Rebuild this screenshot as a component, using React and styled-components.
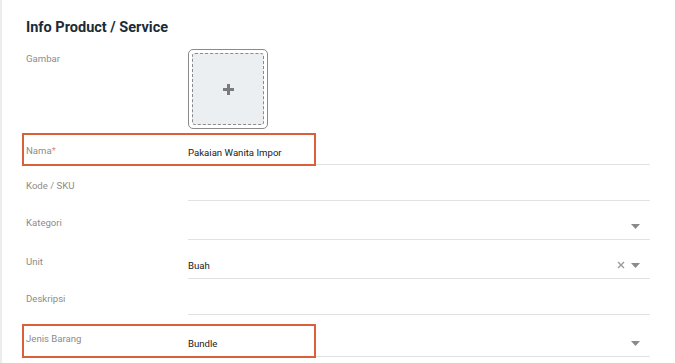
import React from 'react'
import styled, { createGlobalStyle } from 'styled-components'

const Global = createGlobalStyle`
  html, body {
    margin: 0;
    padding: 0;
    background: #fff;
  }
  body {
    font-family: Roboto, "Liberation Sans", Arial, sans-serif;
  }
`

const ROWS = [
  { label: 'Nama', required: true, value: 'Pakaian Wanita Impor', height: 36, labelTop: 15, highlight: 4 },
  { label: 'Kode / SKU', height: 36, labelTop: 14 },
  { label: 'Kategori', height: 39, labelTop: 15, select: true },
  { label: 'Unit', value: 'Buah', height: 39, labelTop: 15, select: true, clearable: true },
  { label: 'Deskripsi', height: 36, labelTop: 13 },
  { label: 'Jenis Barang', value: 'Bundle', height: 42, labelTop: 17, select: true, highlight: 9 },
]

const Caret = () => (
  <svg width="9" height="5" viewBox="0 0 9 5">
    <path d="M0 0h9L4.5 5z" fill="#8a8a8a" />
  </svg>
)

const Clear = () => (
  <svg width="8" height="8" viewBox="0 0 8 8">
    <path d="M1 1l6 6M7 1L1 7" stroke="#9a9a9a" strokeWidth="1.4" />
  </svg>
)

const Plus = () => (
  <svg width="13" height="13" viewBox="0 0 13 13">
    <path d="M6.5 1v11M1 6.5h11" stroke="#7a7a7a" strokeWidth="3" />
  </svg>
)

const App = () => {
  return (
    <Page>
      <Global />
      <Title>Info Product / Service</Title>
      <ImageRow>
        <Label top={3}>Gambar</Label>
        <Upload>
          <DropZone>
            <Plus />
          </DropZone>
        </Upload>
      </ImageRow>
      {ROWS.map((r) => (
        <Row key={r.label} height={r.height}>
          <Label top={r.labelTop}>
            {r.label}
            {r.required && <Star>*</Star>}
          </Label>
          <Field select={r.select}>
            <Value>{r.value}</Value>
            {r.clearable && (
              <Action>
                <Clear />
              </Action>
            )}
            {r.select && (
              <Action>
                <Caret />
              </Action>
            )}
          </Field>
          {r.highlight !== undefined && <Highlight top={r.highlight} />}
        </Row>
      ))}
    </Page>
  )
}

export default App

const Page = styled.div`
  width: 675px;
  height: 363px;
  box-sizing: border-box;
  border-left: 2px solid #ececec;
  padding: 17px 25px 0 24px;
  overflow: hidden;
`

const Title = styled.h1`
  margin: 0 0 13px;
  font-size: 14.5px;
  line-height: 19px;
  font-weight: 700;
  color: #1c2b36;
  padding-top: 1px;
  height: 18px;
`

const ImageRow = styled.div`
  display: grid;
  grid-template-columns: 162px 80px;
  height: 80px;
`

const Row = styled.div`
  position: relative;
  display: grid;
  grid-template-columns: 162px 1fr;
  height: ${(p) => p.height}px;
`

const Label = styled.div`
  padding-top: ${(p) => p.top}px;
  font-size: 9.6px;
  line-height: 13px;
  color: #8c8c8c;
`

const Star = styled.span`
  color: #e58a8a;
`

const Upload = styled.div`
  box-sizing: border-box;
  width: 80px;
  height: 80px;
  padding: 3px;
  border: 1px solid #8a8a8a;
  border-radius: 5px;
  background: #fff;
`

const DropZone = styled.div`
  box-sizing: border-box;
  width: 100%;
  height: 100%;
  display: flex;
  align-items: center;
  justify-content: center;
  border: 1px dashed #8a8a8a;
  border-radius: 3px;
  background: #eceff1;
`

const Field = styled.div`
  display: flex;
  align-items: flex-end;
  gap: 6px;
  padding: 0 10px ${(p) => (p.select ? 5 : 4)}px 0;
  border-bottom: 1px solid #e2e2e2;
`

const Value = styled.div`
  flex: 1;
  font-size: 9.6px;
  line-height: 14px;
  color: #1a1a1a;
`

const Action = styled.div`
  display: flex;
  align-items: center;
  height: 14px;
  margin-bottom: 1px;
`

const Highlight = styled.div`
  position: absolute;
  left: -4px;
  top: ${(p) => p.top}px;
  bottom: -1px;
  width: 294px;
  box-sizing: border-box;
  border: 2px solid #d9603b;
  pointer-events: none;
`
